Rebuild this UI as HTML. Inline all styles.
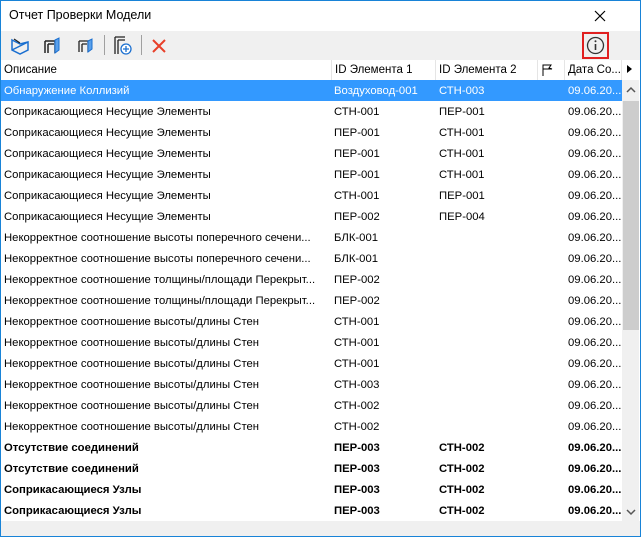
<!DOCTYPE html>
<html><head><meta charset="utf-8"><style>
*{margin:0;padding:0;box-sizing:border-box}
body{width:641px;height:537px;overflow:hidden;background:#fff;font-family:"Liberation Sans","DejaVu Sans",sans-serif;font-size:11.5px;color:#000;position:relative}
.win{position:absolute;left:0;top:0;width:641px;height:537px;border:1px solid #1883d7}
.title{position:absolute;left:9px;top:8px;font-size:12.5px}
.close{position:absolute;left:590px;top:6px}
.tb{position:absolute;left:1px;top:31px;width:639px;height:29px;background:#f0f0f0}
.sep{position:absolute;top:4px;width:1px;height:20px;background:#a0a0a0}
.hdr{position:absolute;left:1px;top:60px;width:621px;height:20px;background:#fff}
.hc{position:absolute;top:0;height:20px;line-height:20px;padding-left:3px;border-right:1px solid #e5e5e5;white-space:nowrap;overflow:hidden}
.rows{position:absolute;left:1px;top:80px;width:621px;font-size:11.3px}
.r{position:relative;height:21px;line-height:22px;white-space:nowrap}
.r span{position:absolute;top:0}
.sel{background:#3399ff;color:#fff}
.b{font-weight:bold}
.c1{left:3px}.c2{left:333px}.c3{left:438px}.c4{left:567px}
.sb{position:absolute;left:622px;top:80px;width:17px;height:441px;background:#f0f0f0}
.thumb{position:absolute;left:1px;top:21px;width:16px;height:229px;background:#cdcdcd}
.bot{position:absolute;left:1px;top:521px;width:639px;height:15px;background:#f0f0f0}
</style></head><body>
<div class="win"></div>
<div class="title">Отчет Проверки Модели</div>
<svg class="close" width="20" height="20"><path d="M5 5L15 15M15 5L5 15" stroke="#000" stroke-width="1.2"/></svg>
<div class="tb">
<svg style="position:absolute;left:9px;top:5px" width="20" height="20"><path d="M2 4l8 4 8-2v8l-8 4-8-4z" fill="none" stroke="#1a6fd0" stroke-width="1.5"/><path d="M2 14L18 6" stroke="#1a6fd0" stroke-width="1.5"/><path d="M4 3l6 4" stroke="#222" stroke-width="1.2"/></svg>
<svg style="position:absolute;left:41px;top:5px" width="20" height="20"><path d="M3 5h10v12M3 5v12M6 8h6M6 8v9" fill="none" stroke="#222" stroke-width="1.5"/><path d="M13 4l4-2v12l-4 3z" fill="#5aa0ea" stroke="#1a6fd0"/></svg>
<svg style="position:absolute;left:76px;top:6px" width="18" height="18"><path d="M2 4h9v11M2 4v11M5 7h5M5 7v8" fill="none" stroke="#222" stroke-width="1.3"/><path d="M11 4l4-2v10l-4 3z" fill="#5aa0ea" stroke="#1a6fd0"/></svg>
<div class="sep" style="left:103px"></div>
<svg style="position:absolute;left:112px;top:4px" width="20" height="22"><path d="M2 2h10M2 2v17M5 5h7M5 5v14" fill="none" stroke="#222" stroke-width="1.3"/><circle cx="13" cy="14" r="5" fill="#fff" stroke="#1a6fd0" stroke-width="1.3"/><path d="M13 11v6M10 14h6" stroke="#1a6fd0" stroke-width="1.3"/></svg>
<div class="sep" style="left:140px"></div>
<svg style="position:absolute;left:150px;top:7px" width="16" height="16"><path d="M2 2L14 14M14 2L2 14" stroke="#e8402a" stroke-width="2"/></svg>
<div style="position:absolute;left:581px;top:1px;width:27px;height:27px;border:2px solid #e02020"></div>
<svg style="position:absolute;left:585px;top:5px" width="19" height="19"><circle cx="9.5" cy="9.5" r="8" fill="none" stroke="#333" stroke-width="1.3"/><path d="M9.5 8v6" stroke="#333" stroke-width="1.6"/><circle cx="9.5" cy="5.3" r="1" fill="#333"/></svg>
</div>
<div class="hdr">
<div class="hc" style="left:0;width:331px">Описание</div>
<div class="hc" style="left:331px;width:104px">ID Элемента 1</div>
<div class="hc" style="left:435px;width:102px">ID Элемента 2</div>
<div class="hc" style="left:537px;width:27px"><svg width="14" height="14" style="margin-top:3px"><path d="M2 13V2h8l-2 3 3 1H2" fill="none" stroke="#000"/></svg></div>
<div class="hc" style="left:564px;width:57px">Дата Со...</div>
</div>
<svg style="position:absolute;left:626px;top:64px" width="8" height="10"><path d="M1 1l5 4-5 4z" fill="#000"/></svg>
<div class="rows">
<div class="r sel"><span class="c1">Обнаружение Коллизий</span><span class="c2">Воздуховод-001</span><span class="c3">СТН-003</span><span class="c4">09.06.20...</span></div>
<div class="r"><span class="c1">Соприкасающиеся Несущие Элементы</span><span class="c2">СТН-001</span><span class="c3">ПЕР-001</span><span class="c4">09.06.20...</span></div>
<div class="r"><span class="c1">Соприкасающиеся Несущие Элементы</span><span class="c2">ПЕР-001</span><span class="c3">СТН-001</span><span class="c4">09.06.20...</span></div>
<div class="r"><span class="c1">Соприкасающиеся Несущие Элементы</span><span class="c2">ПЕР-001</span><span class="c3">СТН-001</span><span class="c4">09.06.20...</span></div>
<div class="r"><span class="c1">Соприкасающиеся Несущие Элементы</span><span class="c2">ПЕР-001</span><span class="c3">СТН-001</span><span class="c4">09.06.20...</span></div>
<div class="r"><span class="c1">Соприкасающиеся Несущие Элементы</span><span class="c2">СТН-001</span><span class="c3">ПЕР-001</span><span class="c4">09.06.20...</span></div>
<div class="r"><span class="c1">Соприкасающиеся Несущие Элементы</span><span class="c2">ПЕР-002</span><span class="c3">ПЕР-004</span><span class="c4">09.06.20...</span></div>
<div class="r"><span class="c1">Некорректное соотношение высоты поперечного сечени...</span><span class="c2">БЛК-001</span><span class="c4">09.06.20...</span></div>
<div class="r"><span class="c1">Некорректное соотношение высоты поперечного сечени...</span><span class="c2">БЛК-001</span><span class="c4">09.06.20...</span></div>
<div class="r"><span class="c1">Некорректное соотношение толщины/площади Перекрыт...</span><span class="c2">ПЕР-002</span><span class="c4">09.06.20...</span></div>
<div class="r"><span class="c1">Некорректное соотношение толщины/площади Перекрыт...</span><span class="c2">ПЕР-002</span><span class="c4">09.06.20...</span></div>
<div class="r"><span class="c1">Некорректное соотношение высоты/длины Стен</span><span class="c2">СТН-001</span><span class="c4">09.06.20...</span></div>
<div class="r"><span class="c1">Некорректное соотношение высоты/длины Стен</span><span class="c2">СТН-001</span><span class="c4">09.06.20...</span></div>
<div class="r"><span class="c1">Некорректное соотношение высоты/длины Стен</span><span class="c2">СТН-001</span><span class="c4">09.06.20...</span></div>
<div class="r"><span class="c1">Некорректное соотношение высоты/длины Стен</span><span class="c2">СТН-003</span><span class="c4">09.06.20...</span></div>
<div class="r"><span class="c1">Некорректное соотношение высоты/длины Стен</span><span class="c2">СТН-002</span><span class="c4">09.06.20...</span></div>
<div class="r"><span class="c1">Некорректное соотношение высоты/длины Стен</span><span class="c2">СТН-002</span><span class="c4">09.06.20...</span></div>
<div class="r b"><span class="c1">Отсутствие соединений</span><span class="c2">ПЕР-003</span><span class="c3">СТН-002</span><span class="c4">09.06.20...</span></div>
<div class="r b"><span class="c1">Отсутствие соединений</span><span class="c2">ПЕР-003</span><span class="c3">СТН-002</span><span class="c4">09.06.20...</span></div>
<div class="r b"><span class="c1">Соприкасающиеся Узлы</span><span class="c2">ПЕР-003</span><span class="c3">СТН-002</span><span class="c4">09.06.20...</span></div>
<div class="r b"><span class="c1">Соприкасающиеся Узлы</span><span class="c2">ПЕР-003</span><span class="c3">СТН-002</span><span class="c4">09.06.20...</span></div>
</div>
<div class="sb"><svg style="position:absolute;left:4px;top:6px" width="10" height="8"><path d="M1 6l4-4 4 4" fill="none" stroke="#555" stroke-width="1.5"/></svg><div class="thumb"></div><svg style="position:absolute;left:4px;top:428px" width="10" height="8"><path d="M1 2l4 4 4-4" fill="none" stroke="#555" stroke-width="1.5"/></svg></div>
<div class="bot"></div>
</body></html>
